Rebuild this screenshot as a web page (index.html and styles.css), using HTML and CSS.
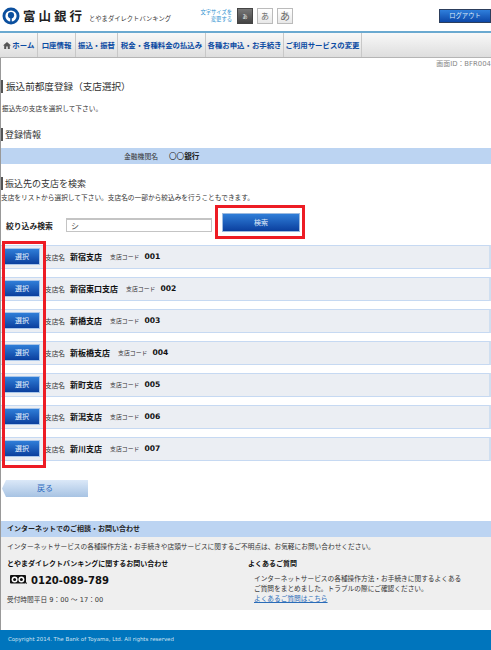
FILE: index.html
```html
<!DOCTYPE html>
<html lang="ja">
<head>
<meta charset="utf-8">
<title>振込前都度登録（支店選択）</title>
<link rel="stylesheet" href="styles.css">
</head>
<body>
<div class="page">

  <header class="head">
    <svg class="logo-mark" width="18" height="18" viewBox="0 0 18 18">
      <circle cx="9" cy="9" r="8.5" fill="#0b4f9e"/>
      <circle cx="9" cy="9" r="5.6" fill="#fff"/>
      <circle cx="9" cy="8.2" r="3.1" fill="#0b4f9e"/>
      <rect x="8.2" y="10" width="1.6" height="6" fill="#0b4f9e"/>
    </svg>
    <div class="logo-name">富山銀行</div>
    <div class="logo-sub">とやまダイレクトバンキング</div>
    <div class="size-label">文字サイズを<br>変更する</div>
    <div class="size-btn active"><span class="s1">あ</span></div>
    <div class="size-btn"><span class="s2">あ</span></div>
    <div class="size-btn"><span class="s3">あ</span></div>
    <a class="logout">ログアウト</a>
  </header>

  <nav class="nav">
    <a class="nav-home">
      <svg width="8" height="7" viewBox="0 0 8 7"><path d="M4 0 L8 3.6 H6.8 V7 H4.8 V4.6 H3.2 V7 H1.2 V3.6 H0 Z" fill="#555"/></svg>
      ホーム</a>
    <a class="w2">口座情報</a>
    <a class="w3">振込・振替</a>
    <a class="w4">税金・各種料金の払込み</a>
    <a class="w5">各種お申込・お手続き</a>
    <a class="w6">ご利用サービスの変更</a>
  </nav>

  <main class="main">
    <div class="screen-id">画面ID：BFR004</div>

    <h2 class="title">振込前都度登録（支店選択）</h2>
    <p class="lead">振込先の支店を選択して下さい。</p>

    <h2 class="title sec-info">登録情報</h2>
    <div class="bank-band"><span>金融機関名</span><span class="bank-val">〇〇<b>銀行</b></span></div>

    <h2 class="title sec-search">振込先の支店を検索</h2>
    <p class="desc">支店をリストから選択して下さい。支店名の一部から絞込みを行うこともできます。</p>

    <div class="search">
      <label class="search-label">絞り込み検索</label>
      <input class="search-input" type="text" value="シ">
      <a class="btn search-btn">検索</a>
    </div>

    <div class="branches">
      <div class="branch"><a class="btn pick">選択</a><span>支店名</span><b class="b-name">新宿支店</b><span class="b-code">支店コード</span><b class="b-no">001</b></div>
      <div class="branch"><a class="btn pick">選択</a><span>支店名</span><b class="b-name">新宿東口支店</b><span class="b-code">支店コード</span><b class="b-no">002</b></div>
      <div class="branch"><a class="btn pick">選択</a><span>支店名</span><b class="b-name">新橋支店</b><span class="b-code">支店コード</span><b class="b-no">003</b></div>
      <div class="branch"><a class="btn pick">選択</a><span>支店名</span><b class="b-name">新板橋支店</b><span class="b-code">支店コード</span><b class="b-no">004</b></div>
      <div class="branch"><a class="btn pick">選択</a><span>支店名</span><b class="b-name">新町支店</b><span class="b-code">支店コード</span><b class="b-no">005</b></div>
      <div class="branch"><a class="btn pick">選択</a><span>支店名</span><b class="b-name">新潟支店</b><span class="b-code">支店コード</span><b class="b-no">006</b></div>
      <div class="branch"><a class="btn pick">選択</a><span>支店名</span><b class="b-name">新川支店</b><span class="b-code">支店コード</span><b class="b-no">007</b></div>
    </div>

    <a class="back">戻る</a>

    <div class="help-band">インターネットでのご相談・お問い合わせ</div>
    <section class="help">
      <p class="help-lead">インターネットサービスの各種操作方法・お手続きや店頭サービスに関するご不明点は、お気軽にお問い合わせください。</p>
      <div class="help-cols">
        <div class="help-left">
          <h3>とやまダイレクトバンキングに関するお問い合わせ</h3>
          <div class="tel">
            <svg width="17" height="10" viewBox="0 0 17 10">
              <rect x="0" y="0" width="16" height="8.5" rx="1" fill="#111"/>
              <circle cx="4.6" cy="4.4" r="3" fill="#fff"/>
              <circle cx="11.4" cy="4.4" r="3" fill="#fff"/>
              <circle cx="4.6" cy="4.4" r="1.5" fill="#111"/>
              <circle cx="11.4" cy="4.4" r="1.5" fill="#111"/>
              <rect x="16" y="7.6" width="1" height="1" fill="#111"/>
            </svg>
            <span>0120-089-789</span>
          </div>
          <p class="hours">受付時間平日 9：00 ～ 17：00</p>
        </div>
        <div class="help-right">
          <h3>よくあるご質問</h3>
          <p>インターネットサービスの各種操作方法・お手続きに関するよくある<br>ご質問をまとめました。トラブルの際にご確認ください。<br><a>よくあるご質問はこちら</a></p>
        </div>
      </div>
    </section>
  </main>

  <footer class="foot">Copyright 2014. The Bank of Toyama, Ltd. All rights reserved</footer>

  <!-- red annotation boxes drawn over the screen -->
  <div class="mark mark-search"></div>
  <div class="mark mark-list"></div>
</div>
</body>
</html>
```

FILE: styles.css
```css
* {
  box-sizing: border-box;
}

html, body {
  margin: 0;
  padding: 0;
  background-color: #ffffff;
}

body {
  font-family: "Noto Sans CJK JP", "Liberation Sans", sans-serif;
  font-size: 6.7px;
  color: #333333;
  overflow: hidden;
}

p, h2, h3 {
  margin: 0;
}

.page {
  position: relative;
  width: 491px;
  height: 650px;
}

/* header */
.head {
  display: flex;
  align-items: center;
  height: 31px;
  padding-left: 2px;
}

.logo-mark {
  flex: none;
  margin-top: 1px;
}

.logo-name {
  width: 66px;
  margin-left: 3px;
  font-size: 12.5px;
  font-weight: bold;
  letter-spacing: 3px;
  color: #222222;
}

.logo-sub {
  width: 111px;
  font-size: 6.3px;
  margin-top: 5px;
  color: #333333;
}

.size-label {
  width: 32px;
  font-size: 5.3px;
  line-height: 7px;
  text-align: right;
  color: #2a8fd0;
  margin-right: 5px;
  white-space: nowrap;
}

.size-btn {
  display: flex;
  align-items: center;
  justify-content: center;
  width: 16px;
  height: 16px;
  margin-right: 4px;
  border: 1px solid #bbbbbb;
  background: linear-gradient(#ffffff, #e8e8e8);
  color: #666666;
}

.size-btn.active {
  border-color: #444444;
  background: linear-gradient(#777777, #444444);
  color: #ffffff;
}

.s1 { font-size: 5px; }
.s2 { font-size: 8px; }
.s3 { font-size: 10px; }

.logout {
  display: block;
  width: 52px;
  height: 14px;
  margin-left: 142px;
  border: 1px solid #2c3e5c;
  background: linear-gradient(#2f7fdc, #0c47a8);
  color: #dfeaf8;
  font-size: 6.3px;
  line-height: 12px;
  text-align: center;
}

/* nav */
.nav {
  display: flex;
  height: 27px;
  border-top: 2px solid #6aa9d0;
  border-bottom: 1px solid #b5b5b5;
  background: linear-gradient(#f8f8f8, #dedede);
  font-size: 7.4px;
  font-weight: bold;
  color: #0b4ba3;
  line-height: 23px;
}

.nav a {
  display: block;
  text-align: center;
  white-space: nowrap;
  border-right: 1px solid #c8c8c8;
}

.nav-home { width: 38px; }
.nav .w2 { width: 38px; }
.nav .w3 { width: 42px; }
.nav .w4 { width: 88px; }
.nav .w5 { width: 78px; }
.nav .w6 { width: 78px; }

.nav-home svg {
  vertical-align: -0.5px;
}

/* main column */
.main {
  height: 572px;
  border-left: 1px solid #999999;
}

.screen-id {
  height: 13px;
  line-height: 13px;
  text-align: right;
  color: #888888;
  font-family: "DejaVu Sans", "Noto Sans CJK JP", sans-serif;
  font-size: 6.9px;
  white-space: nowrap;
}

.title {
  height: 13px;
  margin-top: 9px;
  padding-left: 3px;
  border-left: 2px solid #555555;
  font-size: 9.6px;
  font-weight: normal;
  line-height: 13px;
  color: #333333;
}

.lead {
  height: 10px;
  margin-top: 10px;
  padding-left: 1px;
  line-height: 10px;
}

.sec-info {
  margin-top: 15px;
  padding-left: 2px;
  font-size: 9px;
}

.bank-band {
  display: flex;
  height: 16px;
  margin-top: 7px;
  padding-left: 123px;
  background-color: #bcd4f2;
  line-height: 16px;
  font-size: 6.8px;
}

.bank-val {
  margin-left: 11px;
  font-size: 7.6px;
  color: #222222;
}

.sec-search {
  margin-top: 13px;
  padding-left: 2px;
  font-size: 9px;
}

.desc {
  height: 10px;
  margin-top: 2px;
  padding-left: 0;
  line-height: 10px;
  white-space: nowrap;
}

.search {
  display: flex;
  align-items: flex-end;
  height: 19px;
  margin-top: 11px;
}

.search-label {
  width: 65px;
  padding-left: 5px;
  font-size: 7.8px;
  font-weight: bold;
  line-height: 12px;
  color: #222222;
}

.search-input {
  width: 146px;
  height: 14px;
  margin: 0;
  padding: 0 4px;
  border: 1px solid #c4c4c4;
  border-top-width: 2px;
  font-family: inherit;
  font-size: 8px;
  color: #555555;
  background-color: #ffffff;
  outline: none;
}

.btn {
  display: block;
  border: 1px solid #a9c6ea;
  background: linear-gradient(#2f7ed8, #0b3f9e);
  color: #e4eefb;
  text-align: center;
  font-size: 7px;
}

.search-btn {
  width: 78px;
  height: 19px;
  margin-left: 10px;
  line-height: 17px;
  border-color: #9dbbe0;
  align-self: flex-start;
}

/* branch list */
.branches {
  display: flex;
  flex-direction: column;
  gap: 8px;
  margin-top: 13px;
}

.branch {
  display: flex;
  align-items: center;
  height: 24px;
  padding-bottom: 1px;
  border-top: 1px solid #c6d9f2;
  border-bottom: 1px solid #c6d9f2;
  border-right: 2px solid #d0dff0;
  background-color: #ebeef3;
  white-space: nowrap;
}

.pick {
  width: 36px;
  height: 17px;
  margin-left: 3px;
  margin-right: 5px;
  line-height: 15px;
}

.b-name {
  margin-left: 5px;
  font-size: 8px;
  color: #111111;
}

.b-code {
  margin-left: 8px;
  font-size: 5.9px;
}

.b-no {
  margin-left: 5px;
  font-family: "DejaVu Sans", sans-serif;
  font-size: 7.6px;
  color: #111111;
}

.back {
  display: block;
  width: 86px;
  height: 17px;
  margin-top: 19px;
  margin-left: 1px;
  background: linear-gradient(#dbe8f8, #a7c3e3);
  clip-path: polygon(4px 0, 100% 0, 100% 100%, 4px 100%, 0 50%);
  color: #2f6cc0;
  font-size: 8px;
  line-height: 16px;
  text-align: center;
}

/* help panel */
.help-band {
  height: 16px;
  margin-top: 24px;
  padding-left: 6px;
  background-color: #bcd4f2;
  font-size: 7px;
  font-weight: bold;
  line-height: 15px;
  color: #222222;
}

.help {
  height: 73px;
  padding-top: 4px;
  background-color: #efefef;
}

.help-lead {
  height: 10px;
  padding-left: 6px;
  line-height: 10px;
  white-space: nowrap;
}

.help-cols {
  display: flex;
  margin-top: 7px;
}

.help-left {
  width: 247px;
  padding-left: 6px;
}

.help h3 {
  font-size: 7px;
  font-weight: bold;
  line-height: 10px;
  color: #111111;
  white-space: nowrap;
}

.tel {
  display: flex;
  align-items: center;
  height: 12px;
  margin-top: 6px;
  padding-left: 3px;
  font-family: "DejaVu Sans", sans-serif;
  font-size: 10px;
  font-weight: bold;
  color: #111111;
}

.tel svg {
  margin-right: 4px;
}

.hours {
  margin-top: 9px;
  font-family: "DejaVu Sans", "Noto Sans CJK JP", sans-serif;
  line-height: 10px;
}

.help-right p {
  margin-top: 5px;
  padding-left: 6px;
  line-height: 10px;
  white-space: nowrap;
}

.help-right a {
  color: #2a6cb8;
  text-decoration: underline;
}

/* footer */
.foot {
  height: 20px;
  padding-left: 8px;
  background-color: #0075bd;
  color: #cfe3f2;
  font-family: "DejaVu Sans", sans-serif;
  font-size: 5.45px;
  line-height: 19px;
}

/* annotations */
.mark {
  position: absolute;
  border: 3px solid #ed1c24;
}

.mark-search {
  left: 215px;
  top: 205px;
  width: 90px;
  height: 34px;
}

.mark-list {
  left: 2px;
  top: 241px;
  width: 44px;
  height: 227px;
}
```
